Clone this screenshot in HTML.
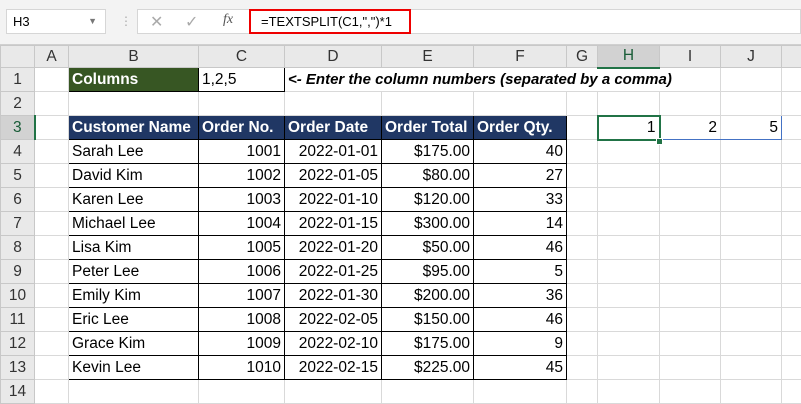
<!DOCTYPE html><html><head><style>
body{margin:0;width:801px;height:402px;overflow:hidden;background:#fff;font-family:"Liberation Sans",sans-serif;position:relative}
.top{position:absolute;left:0;top:0;width:801px;height:45px;background:#f3f3f3;border-bottom:1px solid #d0d0d0;box-sizing:border-box}
.nb{position:absolute;left:6px;top:9px;width:100px;height:25px;background:#fff;border:1px solid #d6d6d6;box-sizing:border-box;font-size:13px;line-height:23px;padding-left:6px}
.fb{position:absolute;left:137px;top:9px;width:664px;height:25px;background:#fff;border:1px solid #d6d6d6;box-sizing:border-box}
.red{position:absolute;left:249px;top:9px;width:162px;height:25px;border:2px solid #e00;box-sizing:border-box;font-size:13px;line-height:21px;padding-left:10px}
table{position:absolute;left:0;top:45px;width:801px;border-collapse:collapse;table-layout:fixed;font-size:15.5px}
td{height:24px;border:1px solid #d9d9d9;padding:0 3px;white-space:nowrap;overflow:visible;box-sizing:border-box}
tr:first-child td{height:22px;background:#e9e9e9;text-align:center;color:#333;border-color:#c8c8c8}
td.h{background:#e9e9e9;text-align:center;color:#333;border-color:#c8c8c8}
.t{border:1px solid #000}
.hd{background:#203764;color:#fff;font-weight:bold;border:1px solid #000}
.r{text-align:right}
</style></head><body>
<div class="top"></div>
<div class="nb">H3<span style="position:absolute;right:8px;top:0;color:#777;font-size:9px">▼</span></div>
<div style="position:absolute;left:120px;top:14px;color:#aaa;font-size:12px">⋮</div>
<div class="fb"><span style="position:absolute;left:12px;top:2px;color:#aaa;font-size:16px">✕</span><span style="position:absolute;left:47px;top:2px;color:#aaa;font-size:16px">✓</span><span style="position:absolute;left:85px;top:2px;color:#555;font-size:14px;font-style:italic;font-family:'Liberation Serif',serif">fx</span></div>
<div class="red">=TEXTSPLIT(C1,",")*1</div>
<table>
<colgroup><col style="width:34px"><col style="width:34px"><col style="width:130px"><col style="width:86px"><col style="width:97px"><col style="width:92px"><col style="width:93px"><col style="width:31px"><col style="width:62px"><col style="width:61px"><col style="width:61px"><col style="width:20px"></colgroup>
<tr><td style="width:34px"></td><td style="width:34px">A</td><td style="width:130px">B</td><td style="width:86px">C</td><td style="width:97px">D</td><td style="width:92px">E</td><td style="width:93px">F</td><td style="width:31px">G</td><td style="width:62px;background:#d2d2d2;border-bottom:2px solid #217346;color:#185c37">H</td><td style="width:61px">I</td><td style="width:61px">J</td><td style="width:20px"></td></tr>
<tr><td class="h">1</td><td></td><td style="background:#375623;color:#fff;font-weight:bold;border:1px solid #000">Columns</td><td class="t">1,2,5</td><td colspan="6" style="border-right:none"><span style="font-weight:bold;font-style:italic;font-size:15px">&lt;- Enter the column numbers (separated by a comma)</span></td><td></td><td></td></tr>
<tr><td class="h">2</td><td></td><td></td><td></td><td></td><td></td><td></td><td></td><td></td><td></td><td></td><td></td></tr>
<tr><td class="h" style="background:#d2d2d2;border-right:2px solid #217346;color:#185c37">3</td><td></td><td class="hd">Customer Name</td><td class="hd">Order No.</td><td class="hd">Order Date</td><td class="hd">Order Total</td><td class="hd">Order Qty.</td><td></td><td class="r" style="border:2px solid #217346">1</td><td class="r" style="border-top:1px solid #4472c4;border-bottom:1px solid #4472c4">2</td><td class="r" style="border:1px solid #4472c4;border-left:none">5</td><td></td></tr>
<tr><td class="h">4</td><td></td><td class="t">Sarah Lee</td><td class="t r">1001</td><td class="t r">2022-01-01</td><td class="t r">$175.00</td><td class="t r">40</td><td></td><td></td><td></td><td></td><td></td></tr>
<tr><td class="h">5</td><td></td><td class="t">David Kim</td><td class="t r">1002</td><td class="t r">2022-01-05</td><td class="t r">$80.00</td><td class="t r">27</td><td></td><td></td><td></td><td></td><td></td></tr>
<tr><td class="h">6</td><td></td><td class="t">Karen Lee</td><td class="t r">1003</td><td class="t r">2022-01-10</td><td class="t r">$120.00</td><td class="t r">33</td><td></td><td></td><td></td><td></td><td></td></tr>
<tr><td class="h">7</td><td></td><td class="t">Michael Lee</td><td class="t r">1004</td><td class="t r">2022-01-15</td><td class="t r">$300.00</td><td class="t r">14</td><td></td><td></td><td></td><td></td><td></td></tr>
<tr><td class="h">8</td><td></td><td class="t">Lisa Kim</td><td class="t r">1005</td><td class="t r">2022-01-20</td><td class="t r">$50.00</td><td class="t r">46</td><td></td><td></td><td></td><td></td><td></td></tr>
<tr><td class="h">9</td><td></td><td class="t">Peter Lee</td><td class="t r">1006</td><td class="t r">2022-01-25</td><td class="t r">$95.00</td><td class="t r">5</td><td></td><td></td><td></td><td></td><td></td></tr>
<tr><td class="h">10</td><td></td><td class="t">Emily Kim</td><td class="t r">1007</td><td class="t r">2022-01-30</td><td class="t r">$200.00</td><td class="t r">36</td><td></td><td></td><td></td><td></td><td></td></tr>
<tr><td class="h">11</td><td></td><td class="t">Eric Lee</td><td class="t r">1008</td><td class="t r">2022-02-05</td><td class="t r">$150.00</td><td class="t r">46</td><td></td><td></td><td></td><td></td><td></td></tr>
<tr><td class="h">12</td><td></td><td class="t">Grace Kim</td><td class="t r">1009</td><td class="t r">2022-02-10</td><td class="t r">$175.00</td><td class="t r">9</td><td></td><td></td><td></td><td></td><td></td></tr>
<tr><td class="h">13</td><td></td><td class="t">Kevin Lee</td><td class="t r">1010</td><td class="t r">2022-02-15</td><td class="t r">$225.00</td><td class="t r">45</td><td></td><td></td><td></td><td></td><td></td></tr>
<tr><td class="h">14</td><td></td><td></td><td></td><td></td><td></td><td></td><td></td><td></td><td></td><td></td><td></td></tr>
</table>
<div style="position:absolute;left:656px;top:138px;width:5px;height:5px;background:#217346;border:1px solid #fff"></div>
</body></html>
